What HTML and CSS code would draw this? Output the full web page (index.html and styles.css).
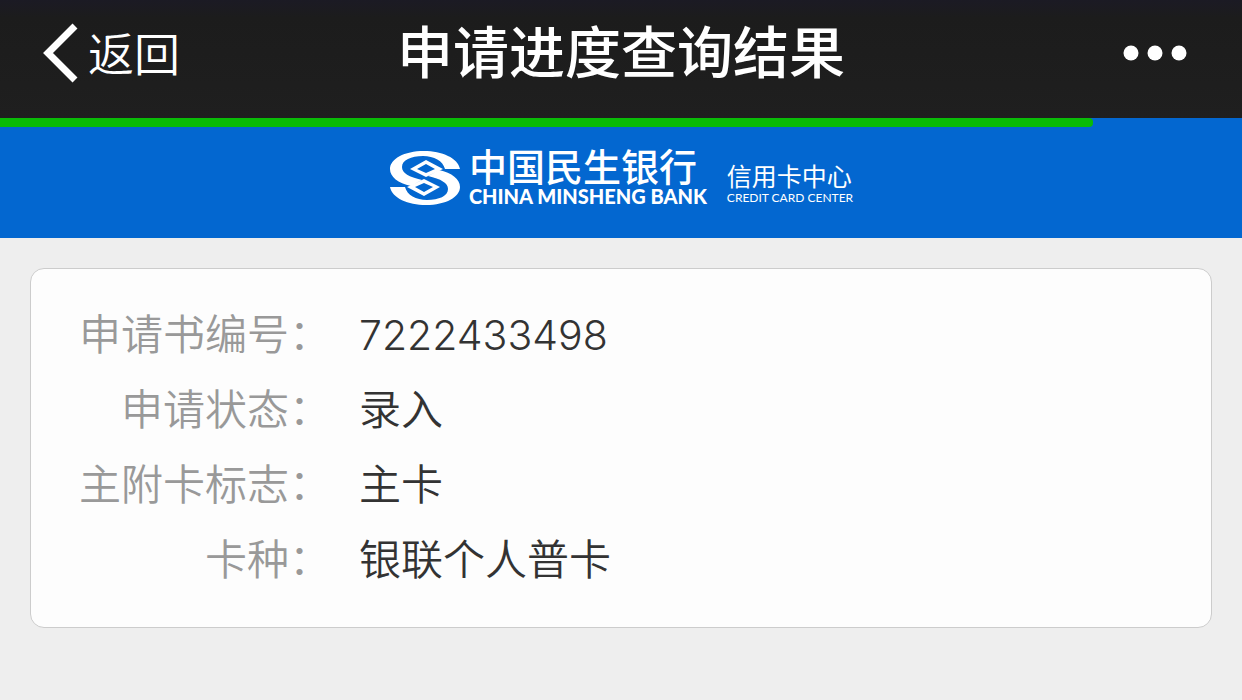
FILE: index.html
```html
<!DOCTYPE html>
<html lang="zh-CN">
  <head>
    <meta charset="UTF-8" />
    <meta name="viewport" content="width=device-width, initial-scale=1.0" />
    <title>申请进度查询结果</title>
    <link rel="stylesheet" href="styles.css">
  </head>
  <body>
    <!-- 顶部导航 -->
    <header class="navbar">
      <a class="back" href="#">
        <svg class="back-icon" width="36" height="60" viewBox="0 0 36 60" aria-hidden="true">
          <path d="M33 3 L6 30 L33 57" fill="none" stroke="#fff" stroke-width="7" />
        </svg>
        <span class="back-text">返回</span>
      </a>
      <h1 class="title">申请进度查询结果</h1>
      <button class="more" type="button" aria-label="更多">
        <svg width="64" height="16" viewBox="0 0 64 16" fill="#fff" aria-hidden="true">
          <circle cx="8" cy="8" r="7.5" />
          <circle cx="32" cy="8" r="7.5" />
          <circle cx="56" cy="8" r="7.5" />
        </svg>
      </button>
    </header>

    <!-- 银行标志 -->
    <div class="banner">
      <div class="progress"></div>
      <div class="brand">
        <svg class="brand-logo" width="72" height="54" viewBox="0 0 72 54" fill="#fff" aria-hidden="true">
          <path d="M71 18 C69 7 53 0 35 0 C15 0 1 8 1 18 C1 26 9 32 22 35 L33 29 C20 26 13 22 13 16 C13 9 22 5 34 5 C45 5 54 10 56 18 Z" />
          <path d="M1 36 C3 47 19 54 37 54 C57 54 71 46 71 36 C71 28 63 22 50 19 L39 25 C52 28 59 32 59 38 C59 45 50 49 38 49 C27 49 18 44 16 36 Z" />
          <path fill-rule="evenodd" d="M37 9 L54 18 L37 26 L21 18 Z M37 13 L28 18 L37 22 L46 18 Z" />
          <path fill-rule="evenodd" d="M35 28 L51 36 L35 45 L18 36 Z M35 32 L26 36 L35 41 L44 36 Z" />
        </svg>
        <div class="brand-bank">
          <div class="bank-cn">中国民生银行</div>
          <div class="bank-en">CHINA MINSHENG BANK</div>
        </div>
        <div class="brand-center">
          <div class="center-cn">信用卡中心</div>
          <div class="center-en">CREDIT CARD CENTER</div>
        </div>
      </div>
    </div>

    <!-- 查询结果 -->
    <main class="content">
      <dl class="card">
        <dt>申请书编号：</dt>
        <dd class="number">7222433498</dd>
        <dt>申请状态：</dt>
        <dd>录入</dd>
        <dt>主附卡标志：</dt>
        <dd>主卡</dd>
        <dt>卡种：</dt>
        <dd>银联个人普卡</dd>
      </dl>
    </main>
  </body>
</html>
```
FILE: styles.css
```css
* {
  box-sizing: border-box;
}

body {
  margin: 0;
  background: #eee;
  color: #333;
  font-family: "Noto Sans CJK SC", sans-serif;
}

/* 顶部导航 */
.navbar {
  display: grid;
  grid-template-columns: 1fr auto 1fr;
  align-items: center;
  height: 118px;
  padding-bottom: 12px;
  background: linear-gradient(#1b1a24, #1c1c1c 18px, #1f1f1f);
  color: #fff;
}

.back {
  display: flex;
  align-items: center;
  gap: 10px;
  margin-left: 42px;
  color: #fff;
  font-size: 46px;
  font-weight: 350;
  line-height: 54px;
  text-decoration: none;
}

.back-text {
  padding-bottom: 4px;
}

.title {
  margin: 0;
  padding-bottom: 8px;
  font-size: 56px;
  font-weight: 500;
  line-height: 80px;
}

.more {
  display: flex;
  justify-self: end;
  margin-right: 55px;
  padding: 0;
  border: none;
  background: none;
  cursor: pointer;
}

/* 银行标志 */
.banner {
  height: 120px;
  background: #0367d0;
  color: #fff;
}

.progress {
  width: 88%;
  height: 9px;
  border-radius: 0 4px 4px 0;
  background: #09bb07;
}

.brand {
  display: flex;
  justify-content: center;
  align-items: flex-end;
  padding-top: 20px;
}

.brand-bank {
  margin-left: 8px;
}

.bank-cn {
  margin-bottom: 4px;
  font-size: 38px;
  font-weight: 500;
  line-height: 36px;
}

.bank-en {
  font-family: Lato, sans-serif;
  font-size: 20px;
  font-weight: 900;
  line-height: 18px;
}

.brand-center {
  margin-left: 20px;
}

.center-cn {
  margin-bottom: 2px;
  font-size: 25px;
  line-height: 28px;
}

.center-en {
  font-family: Lato, sans-serif;
  font-size: 12px;
  line-height: 14px;
}

/* 查询结果 */
.content {
  padding: 30px;
}

.card {
  display: grid;
  grid-template-columns: 252px 1fr;
  column-gap: 28px;
  align-items: baseline;
  margin: 0;
  padding: 25px 48px 33px;
  border: 1px solid #ccc;
  border-radius: 14px;
  background: #fdfdfd;
  font-size: 42px;
  font-weight: 350;
  line-height: 75px;
}

.card dt {
  color: #999;
  text-align: right;
}

.card dd {
  margin: 0;
}

.card .number {
  font-family: Inter, sans-serif;
  font-size: 41px;
  font-weight: 300;
  line-height: 60px;
}
```
